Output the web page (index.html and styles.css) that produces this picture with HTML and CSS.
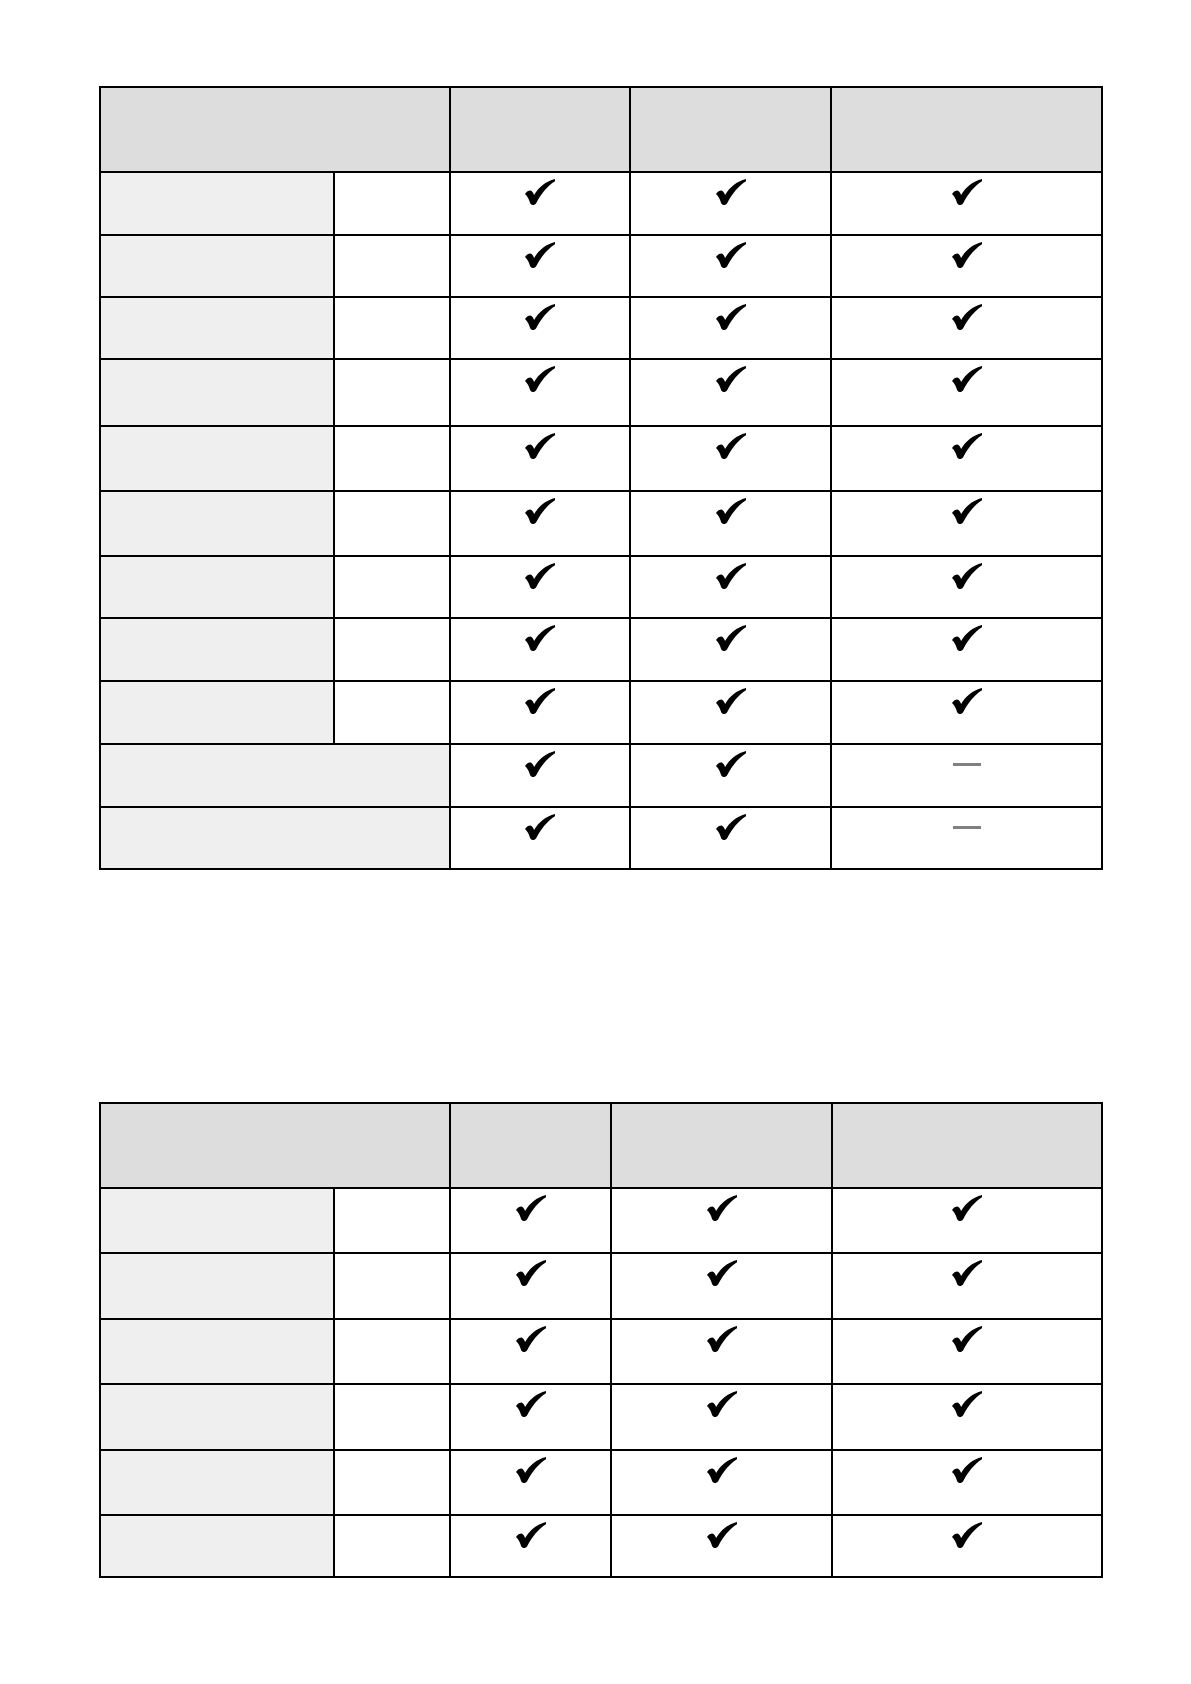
FILE: index.html
```html
<!DOCTYPE html>
<html>
<head>
<meta charset="utf-8">
<link rel="stylesheet" href="styles.css">
</head>
<body>
<svg width="0" height="0" class="defs">
  <defs>
    <symbol id="chk" viewBox="0 0 30 26">
      <path d="M0,15 C1.5,12.6 3.6,11.5 5.3,11.5 C7.1,11.5 8.1,13.8 9.1,16 C13.6,8.3 20.6,2.4 30,0 L30,2.2 C22.6,6.8 16.2,14.6 11.3,24 C10.4,25.5 9.2,26 7.8,26 C6.3,26 5.4,25 4.9,23.5 C3.9,20 2.3,17.2 0,15 Z" fill="#000"/>
    </symbol>
  </defs>
</svg>
<div class="page">
  <div class="grid t1">
    <div class="c head span2"></div><div class="c head"></div><div class="c head"></div><div class="c head"></div>

    <div class="c label"></div><div class="c"></div><div class="c mark"><svg class="ck"><use href="#chk"/></svg></div><div class="c mark"><svg class="ck"><use href="#chk"/></svg></div><div class="c mark"><svg class="ck"><use href="#chk"/></svg></div>
    <div class="c label"></div><div class="c"></div><div class="c mark"><svg class="ck"><use href="#chk"/></svg></div><div class="c mark"><svg class="ck"><use href="#chk"/></svg></div><div class="c mark"><svg class="ck"><use href="#chk"/></svg></div>
    <div class="c label"></div><div class="c"></div><div class="c mark"><svg class="ck"><use href="#chk"/></svg></div><div class="c mark"><svg class="ck"><use href="#chk"/></svg></div><div class="c mark"><svg class="ck"><use href="#chk"/></svg></div>
    <div class="c label"></div><div class="c"></div><div class="c mark"><svg class="ck"><use href="#chk"/></svg></div><div class="c mark"><svg class="ck"><use href="#chk"/></svg></div><div class="c mark"><svg class="ck"><use href="#chk"/></svg></div>
    <div class="c label"></div><div class="c"></div><div class="c mark"><svg class="ck"><use href="#chk"/></svg></div><div class="c mark"><svg class="ck"><use href="#chk"/></svg></div><div class="c mark"><svg class="ck"><use href="#chk"/></svg></div>
    <div class="c label"></div><div class="c"></div><div class="c mark"><svg class="ck"><use href="#chk"/></svg></div><div class="c mark"><svg class="ck"><use href="#chk"/></svg></div><div class="c mark"><svg class="ck"><use href="#chk"/></svg></div>
    <div class="c label"></div><div class="c"></div><div class="c mark"><svg class="ck"><use href="#chk"/></svg></div><div class="c mark"><svg class="ck"><use href="#chk"/></svg></div><div class="c mark"><svg class="ck"><use href="#chk"/></svg></div>
    <div class="c label"></div><div class="c"></div><div class="c mark"><svg class="ck"><use href="#chk"/></svg></div><div class="c mark"><svg class="ck"><use href="#chk"/></svg></div><div class="c mark"><svg class="ck"><use href="#chk"/></svg></div>
    <div class="c label"></div><div class="c"></div><div class="c mark"><svg class="ck"><use href="#chk"/></svg></div><div class="c mark"><svg class="ck"><use href="#chk"/></svg></div><div class="c mark"><svg class="ck"><use href="#chk"/></svg></div>

    <div class="c label span2"></div><div class="c mark"><svg class="ck"><use href="#chk"/></svg></div><div class="c mark"><svg class="ck"><use href="#chk"/></svg></div><div class="c mark"><span class="dash"></span></div>
    <div class="c label span2"></div><div class="c mark"><svg class="ck"><use href="#chk"/></svg></div><div class="c mark"><svg class="ck"><use href="#chk"/></svg></div><div class="c mark"><span class="dash"></span></div>
  </div>

  <div class="grid t2">
    <div class="c head span2"></div><div class="c head"></div><div class="c head"></div><div class="c head"></div>

    <div class="c label"></div><div class="c"></div><div class="c mark"><svg class="ck"><use href="#chk"/></svg></div><div class="c mark"><svg class="ck"><use href="#chk"/></svg></div><div class="c mark"><svg class="ck"><use href="#chk"/></svg></div>
    <div class="c label"></div><div class="c"></div><div class="c mark"><svg class="ck"><use href="#chk"/></svg></div><div class="c mark"><svg class="ck"><use href="#chk"/></svg></div><div class="c mark"><svg class="ck"><use href="#chk"/></svg></div>
    <div class="c label"></div><div class="c"></div><div class="c mark"><svg class="ck"><use href="#chk"/></svg></div><div class="c mark"><svg class="ck"><use href="#chk"/></svg></div><div class="c mark"><svg class="ck"><use href="#chk"/></svg></div>
    <div class="c label"></div><div class="c"></div><div class="c mark"><svg class="ck"><use href="#chk"/></svg></div><div class="c mark"><svg class="ck"><use href="#chk"/></svg></div><div class="c mark"><svg class="ck"><use href="#chk"/></svg></div>
    <div class="c label"></div><div class="c"></div><div class="c mark"><svg class="ck"><use href="#chk"/></svg></div><div class="c mark"><svg class="ck"><use href="#chk"/></svg></div><div class="c mark"><svg class="ck"><use href="#chk"/></svg></div>
    <div class="c label"></div><div class="c"></div><div class="c mark"><svg class="ck"><use href="#chk"/></svg></div><div class="c mark"><svg class="ck"><use href="#chk"/></svg></div><div class="c mark"><svg class="ck"><use href="#chk"/></svg></div>
  </div>
</div>
</body>
</html>
```

FILE: styles.css
```css
html, body {
  margin: 0;
  padding: 0;
  background: #fff;
  font-family: "Liberation Sans", Arial, sans-serif;
}

.defs {
  position: absolute;
  width: 0;
  height: 0;
  overflow: hidden;
}

.page {
  padding: 86px 0 0 99px;
  display: flex;
  flex-direction: column;
  gap: 232px;
  align-items: flex-start;
}

.grid {
  display: grid;
  gap: 2px;
  padding: 2px;
  background: #000;
}

.t1 {
  grid-template-columns: 232px 114px 178px 199px 269px;
  grid-template-rows: 83px 61px 60px 60px 65px 63px 63px 60px 61px 61px 61px 60px;
}

.t2 {
  grid-template-columns: 232px 114px 159px 219px 268px;
  grid-template-rows: 83px 63px 64px 63px 64px 63px 60px;
}

.c {
  background: #fff;
}

.head {
  background: #dddddd;
}

.label {
  background: #efefef;
}

.span2 {
  grid-column: span 2;
}

.mark {
  display: flex;
  justify-content: center;
  align-items: flex-start;
  padding-top: 6px;
}

.ck {
  width: 30px;
  height: 26px;
  display: block;
}

.dash {
  display: block;
  width: 28px;
  height: 3px;
  margin-top: 12px;
  margin-left: 1px;
  background: #808080;
}
```
